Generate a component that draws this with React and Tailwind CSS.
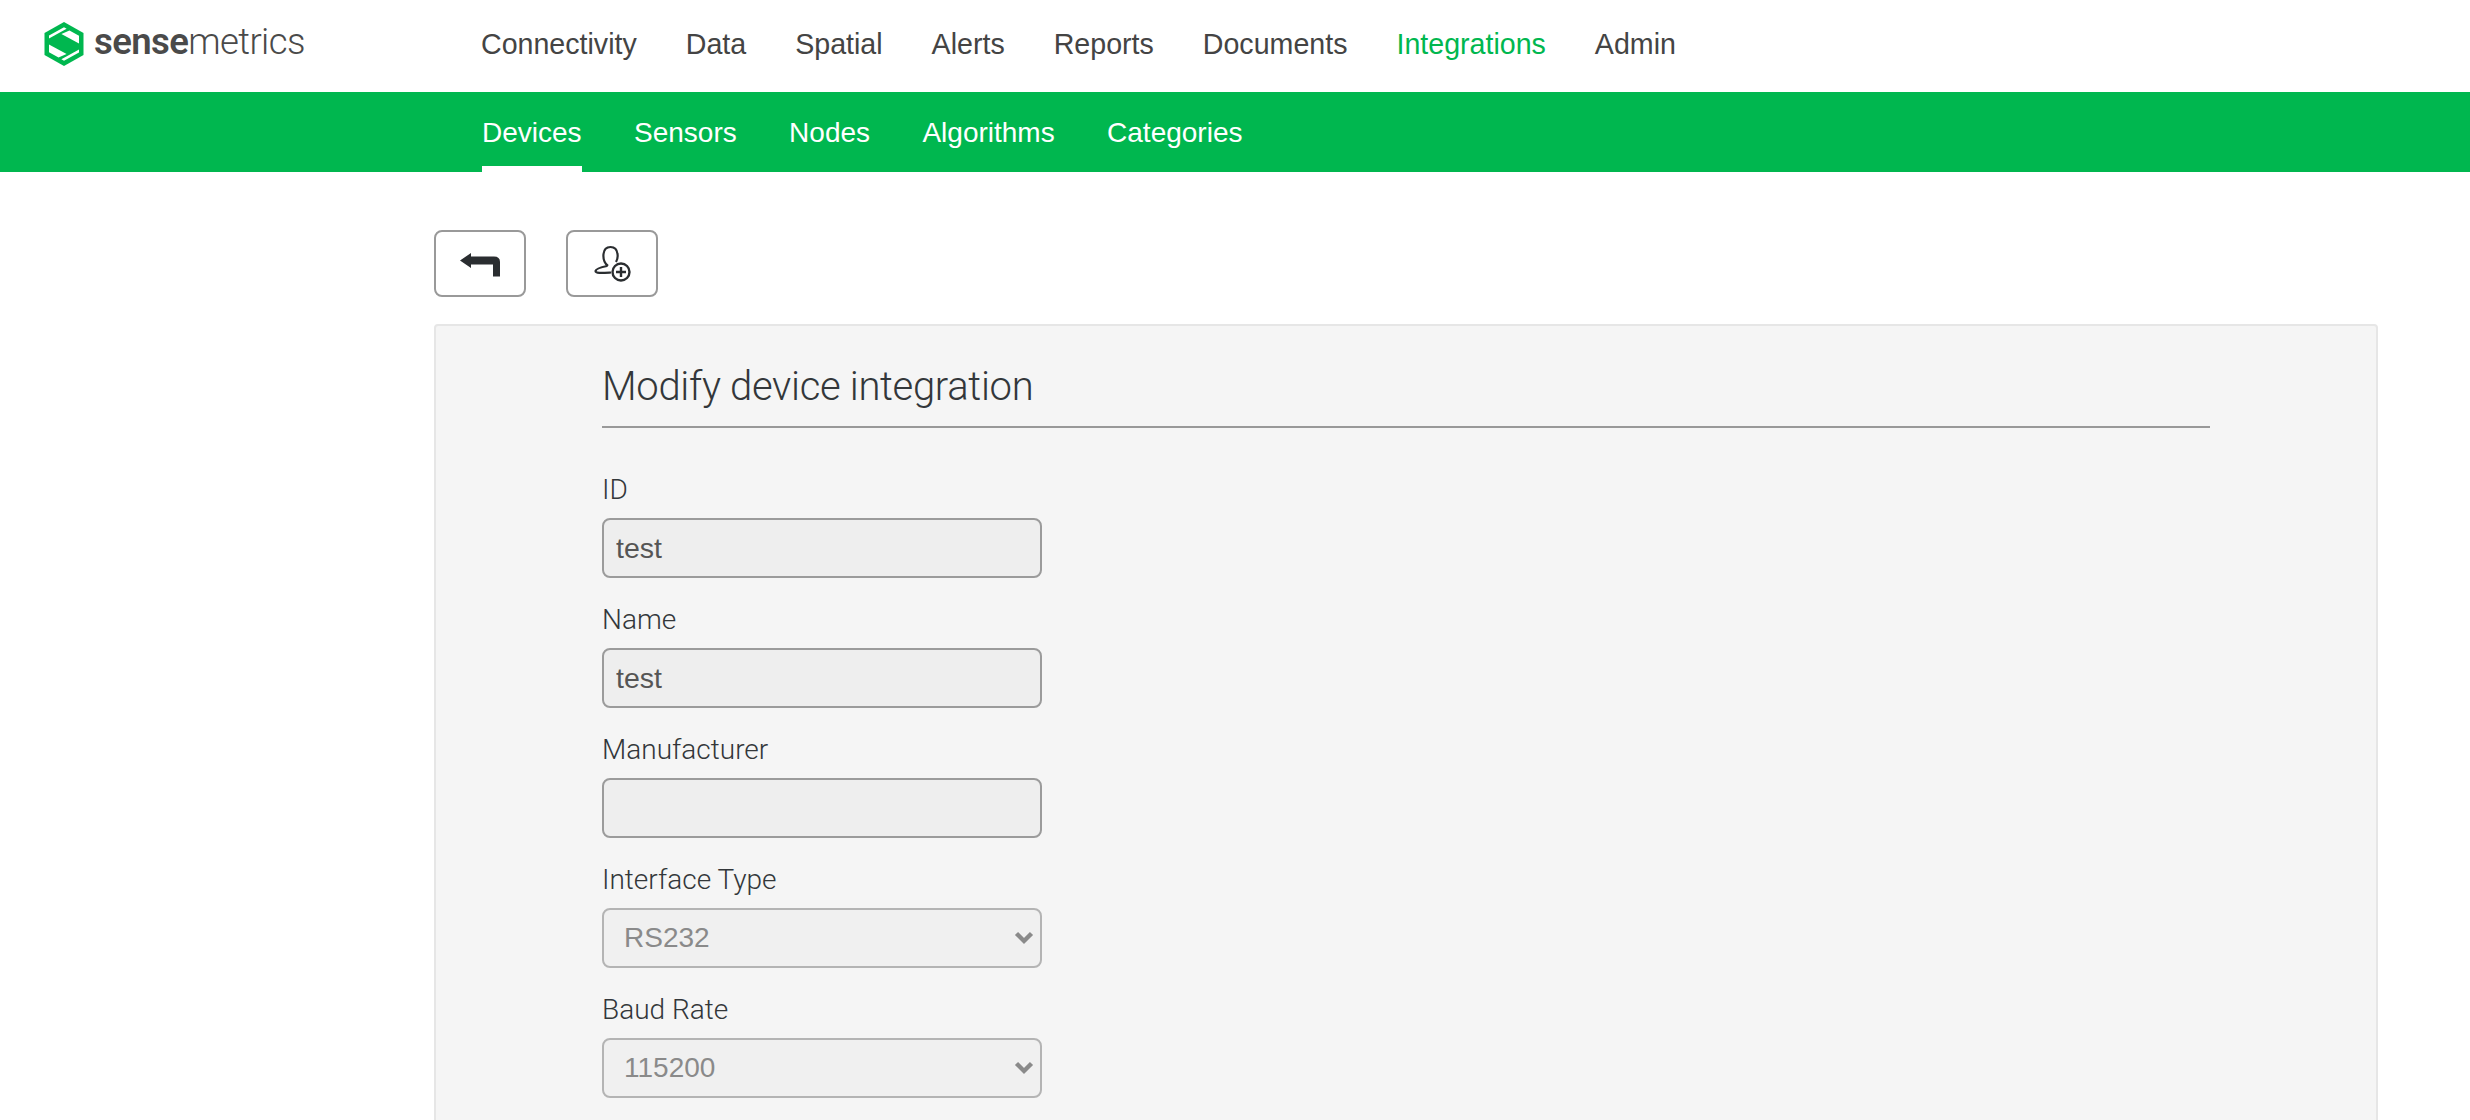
import React from "react";

const mainLinks = ["Connectivity", "Data", "Spatial", "Alerts", "Reports", "Documents", "Integrations", "Admin"];
const subLinks = ["Devices", "Sensors", "Nodes", "Algorithms", "Categories"];

const Logo = () => (
  <svg width="40" height="44" viewBox="0 0 40 44" className="shrink-0">
    <path d="M20 0 L39.5 11 V33 L20 44 L0.5 33 V11 Z" fill="#00b74f" />
    <path d="M5 13.6 L20 5.2 L22.6 6.7 L5 16.6 Z" fill="#ffffff" />
    <path d="M25.5 8.4 L35 13.8 V21.6 L17.4 12 Z" fill="#ffffff" />
    <path d="M5 22.4 L22.6 32 L14.5 35.6 L5 30.2 Z" fill="#ffffff" />
    <path d="M35 30.4 L20 38.8 L17.4 37.3 L35 27.4 Z" fill="#ffffff" />
  </svg>
);

const BackIcon = () => (
  <svg width="42" height="28" viewBox="0 0 42 28">
    <path d="M1 10.5 L12 3 V6.5 H35 Q41 6.5 41 12 V26.5 H34 V14.5 H12 V18 Z" fill="#2a2d30" />
  </svg>
);

const UserPlusIcon = () => (
  <svg width="38" height="38" viewBox="0 0 38 38" fill="none" stroke="#2a2d30" strokeWidth="2.2" className="ml-[2px]">
    <path d="M14 21 C10 18 9 14 9.5 9 C10 4 13 2 16.5 2 C20 2 23 4 23.5 9 C24 12 23.5 14.5 22 17" />
    <path d="M13 21 C8 22 2 23.5 1.5 26 C1.5 28.5 8 28 17 27.5" />
    <circle cx="27" cy="27" r="8.5" strokeWidth="2.4" />
    <path d="M27 22 V32 M22 27 H32" strokeWidth="2.4" />
  </svg>
);

const Chevron = () => (
  <svg width="20" height="14" viewBox="0 0 20 14" className="absolute right-[8px] top-[23px] pointer-events-none">
    <path d="M2.5 2.5 L10 10 L17.5 2.5" fill="none" stroke="#8a8a8a" strokeWidth="4.4" />
  </svg>
);

const Label = ({ children }) => (
  <label className="block text-[28px] leading-[34px] font-['Roboto',sans-serif] font-light text-[#33373a] mb-[11px]">{children}</label>
);

const TextField = ({ label, value }) => (
  <div className="mb-[25px]">
    <Label>{label}</Label>
    <input
      readOnly
      value={value}
      className="block w-[440px] h-[60px] px-[12px] text-[28.5px] text-[#555555] bg-[#eeeeee] border-2 border-[#9b9b9b] rounded-[8px] outline-none"
    />
  </div>
);

const SelectField = ({ label, value }) => (
  <div className="mb-[25px]">
    <Label>{label}</Label>
    <div className="relative w-[440px]">
      <select
        disabled
        defaultValue={value}
        className="block w-full h-[60px] pl-[20px] text-[28px] text-[#8a8a8a] bg-[#f0f0f0] border-2 border-[#b4b4b4] rounded-[8px] appearance-none outline-none"
      >
        <option>{value}</option>
      </select>
      <Chevron />
    </div>
  </div>
);

const App = () => {
  return (
    <div className="h-screen overflow-hidden bg-white font-['Liberation_Sans',sans-serif]">
      {/* top nav */}
      <div className="h-[92px] flex items-center">
        <div className="w-[481px] pl-[44px] flex items-center gap-[10px] mb-[4px]">
          <Logo />
          <span className="text-[36.5px] tracking-[-0.6px] text-[#4a4a4a] font-['Roboto',sans-serif] font-light pb-[4px]">
            <span className="font-semibold">sense</span>metrics
          </span>
        </div>
        <div className="flex gap-[49px] pb-[3px] text-[28.6px] text-[#444444]">
          {mainLinks.map((link) => (
            <a key={link} className={link === "Integrations" ? "text-[#00b74f]" : ""}>
              {link}
            </a>
          ))}
        </div>
      </div>

      {/* sub nav */}
      <div className="h-[80px] bg-[#00b74f] pl-[482px] flex gap-[52.4px] text-[28px] text-white">
        {subLinks.map((link) => (
          <a
            key={link}
            className={`h-full flex items-center pt-[8px] border-b-[6px] ${
              link === "Devices" ? "border-white" : "border-transparent"
            }`}
          >
            {link}
          </a>
        ))}
      </div>

      {/* toolbar */}
      <div className="pl-[434px] pt-[58px] pb-[27px] flex gap-[40px]">
        <button className="w-[92px] h-[67px] flex items-center justify-center bg-white border-2 border-[#999999] rounded-[8px]">
          <BackIcon />
        </button>
        <button className="w-[92px] h-[67px] flex items-center justify-center bg-white border-2 border-[#999999] rounded-[8px]">
          <UserPlusIcon />
        </button>
      </div>

      {/* form panel */}
      <div className="ml-[434px] w-[1944px] h-[900px] bg-[#f5f5f5] border-2 border-[#e6e6e6] rounded-[4px] px-[166px] pt-[27px]">
        <h2 className="text-[40px] leading-[68px] pb-[5px] tracking-[-0.32px] font-['Roboto',sans-serif] font-light text-[#33373a] border-b-2 border-[#999999] mb-[45px]">
          Modify device integration
        </h2>
        <TextField label="ID" value="test" />
        <TextField label="Name" value="test" />
        <TextField label="Manufacturer" value="" />
        <SelectField label="Interface Type" value="RS232" />
        <SelectField label="Baud Rate" value="115200" />
      </div>
    </div>
  );
};

export default App;
